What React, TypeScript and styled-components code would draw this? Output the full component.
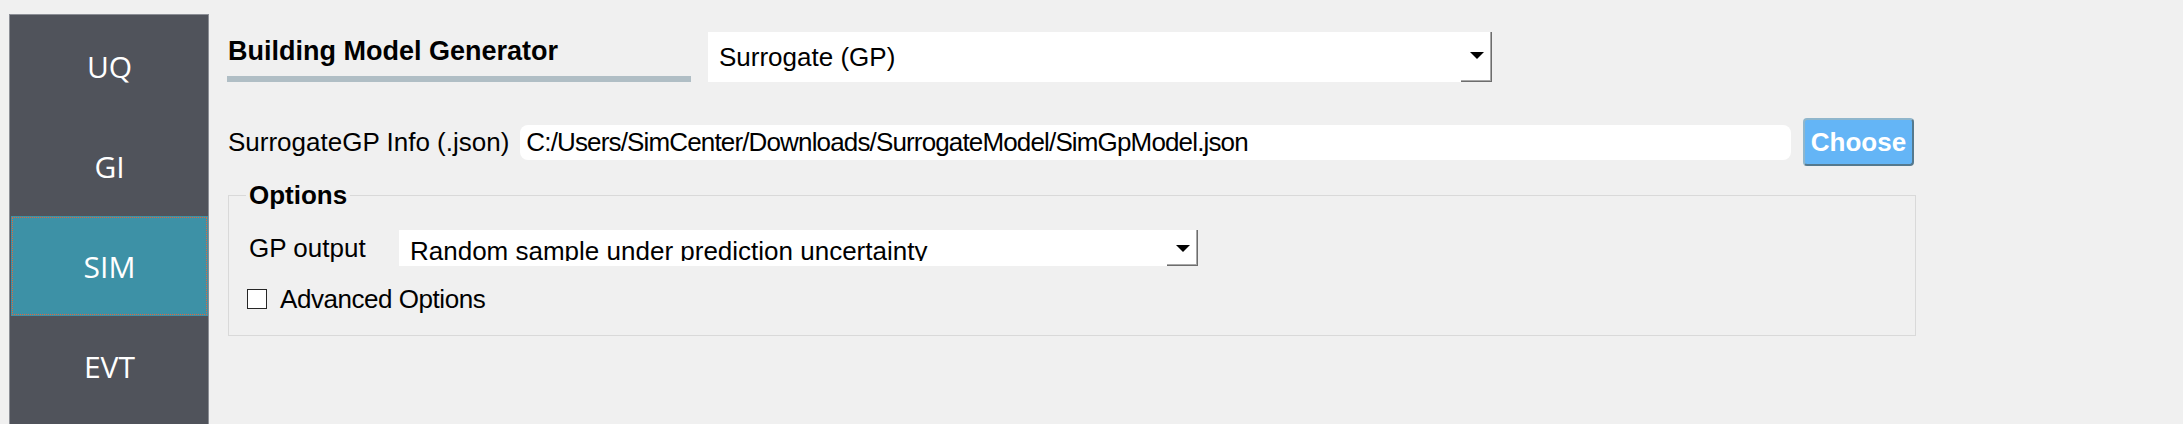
import React from "react";
import styled, { createGlobalStyle } from "styled-components";

const GlobalStyle = createGlobalStyle`
  html, body {
    margin: 0;
    padding: 0;
    background: #f0f0f0;
    overflow: hidden;
  }
  body {
    font-family: "Liberation Sans", Arial, sans-serif;
    color: #000;
  }
  * { box-sizing: border-box; }
`;

const Page = styled.div`
  display: flex;
  align-items: flex-start;
  width: 2183px;
  height: 424px;
  overflow: hidden;
`;

const Sidebar = styled.nav`
  margin: 14px 0 0 9px;
  width: 200px;
  height: 420px;
  flex-shrink: 0;
  background: #50535b;
  border: 1px solid #8b8e95;
  border-bottom: none;
  padding: 1px 0 0 1px;
  display: flex;
  flex-direction: column;
`;

const NavItem = styled.div<{ $active?: boolean }>`
  height: 100px;
  width: 197px;
  display: flex;
  align-items: center;
  justify-content: center;
  font-family: "Open Sans", "Noto Sans", sans-serif;
  font-size: 30px;
  color: #ffffff;
  background: ${(p) => (p.$active ? "#3d91a6" : "transparent")};
  outline: ${(p) => (p.$active ? "1px dotted #e0663c" : "none")};
  outline-offset: -2px;
`;

const Main = styled.main`
  margin-left: 18px;
  padding-top: 32px;
  width: 1689px;
  display: flex;
  flex-direction: column;
`;

const TopRow = styled.div`
  display: flex;
  align-items: flex-end;
  gap: 17px;
`;

const HeaderBlock = styled.div`
  width: 464px;
  display: flex;
  flex-direction: column;
`;

const HeaderTitle = styled.h1`
  margin: 0 0 10px 0;
  padding-left: 1px;
  font: bold 27px/30px "Liberation Sans", Arial, sans-serif;
  white-space: nowrap;
`;

const HeaderBar = styled.div`
  height: 6px;
  background: #b0bec5;
`;

const Combo = styled.div<{ $w: number; $h: number }>`
  width: ${(p) => p.$w}px;
  height: ${(p) => p.$h}px;
  background: #ffffff;
  display: flex;
  align-items: center;
  flex-shrink: 0;
`;

const ComboText = styled.div<{ $clip?: boolean }>`
  flex: 1;
  padding-left: 11px;
  font-size: 26px;
  white-space: nowrap;
  overflow: hidden;
  align-self: ${(p) => (p.$clip ? "flex-start" : "center")};
  height: ${(p) => (p.$clip ? "31px" : "auto")};
  line-height: ${(p) => (p.$clip ? "42px" : "30px")};
`;

const ArrowButton = styled.div<{ $lift: number }>`
  width: 31px;
  align-self: stretch;
  display: flex;
  align-items: center;
  justify-content: center;
  padding-bottom: ${(p) => p.$lift}px;
  box-shadow: inset -1px -1px 0 #6d6d6d, inset -2px -2px 0 #a8a8a8;
`;

const FileRow = styled.div`
  display: flex;
  align-items: center;
  margin-top: 36px;
  height: 48px;
  padding-left: 1px;
  padding-right: 2px;
`;

const FieldLabel = styled.label<{ $w?: number }>`
  font-size: 26px;
  line-height: 30px;
  white-space: nowrap;
  width: ${(p) => (p.$w ? `${p.$w}px` : "auto")};
  flex-shrink: 0;
  margin-right: ${(p) => (p.$w ? "0" : "11px")};
`;

const LineEdit = styled.input`
  flex: 1;
  min-width: 0;
  height: 35px;
  border: none;
  outline: none;
  background: #ffffff;
  border-radius: 8px;
  padding: 0 0 0 6px;
  font-family: "Liberation Sans", Arial, sans-serif;
  font-size: 26px;
  letter-spacing: -0.85px;
  color: #000;
`;

const ChooseButton = styled.button`
  margin-left: 12px;
  width: 111px;
  height: 48px;
  flex-shrink: 0;
  background: #64b5f6;
  border: 2px solid;
  border-color: #8fb6cc #55798e #55798e #8fb6cc;
  border-radius: 4px;
  color: #ffffff;
  font: bold 26px/1 "Liberation Sans", Arial, sans-serif;
  padding: 0;
`;

const GroupBox = styled.fieldset`
  margin: 14px 0 0 1px;
  width: 1688px;
  border: 1px solid #d9d9d9;
  padding: 20px 20px 21px 20px;
  min-inline-size: 0;
`;

const GroupTitle = styled.legend`
  margin-left: -3px;
  padding: 0 3px;
  font: bold 26px/30px "Liberation Sans", Arial, sans-serif;
`;

const OptionRow = styled.div`
  display: flex;
  align-items: center;
  height: 36px;
`;

const CheckRow = styled.div`
  display: flex;
  align-items: center;
  height: 30px;
  margin-top: 18px;
`;

const CheckBox = styled.span`
  width: 20px;
  height: 20px;
  margin-left: -2px;
  background: #ffffff;
  border: 1px solid #262626;
  flex-shrink: 0;
`;

const CheckLabel = styled.span`
  margin-left: 13px;
  font-size: 26px;
  line-height: 30px;
  letter-spacing: -0.45px;
  white-space: nowrap;
`;

const DownArrow = () => (
  <svg width="14" height="7" viewBox="0 0 14 7" aria-hidden="true">
    <path d="M0 0 H14 L7 7 Z" fill="#000" />
  </svg>
);

export default function App() {
  return (
    <>
      <GlobalStyle />
      <Page>
        <Sidebar>
          <NavItem>UQ</NavItem>
          <NavItem>GI</NavItem>
          <NavItem $active>SIM</NavItem>
          <NavItem>EVT</NavItem>
        </Sidebar>
        <Main>
          <TopRow>
            <HeaderBlock>
              <HeaderTitle>Building Model Generator</HeaderTitle>
              <HeaderBar />
            </HeaderBlock>
            <Combo $w={784} $h={50}>
              <ComboText>Surrogate (GP)</ComboText>
              <ArrowButton $lift={4}>
                <DownArrow />
              </ArrowButton>
            </Combo>
          </TopRow>
          <FileRow>
            <FieldLabel>SurrogateGP Info (.json)</FieldLabel>
            <LineEdit
              readOnly
              value="C:/Users/SimCenter/Downloads/SurrogateModel/SimGpModel.json"
            />
            <ChooseButton>Choose</ChooseButton>
          </FileRow>
          <GroupBox>
            <GroupTitle>Options</GroupTitle>
            <OptionRow>
              <FieldLabel $w={150}>GP output</FieldLabel>
              <Combo $w={799} $h={36}>
                <ComboText $clip>Random sample under prediction uncertainty</ComboText>
                <ArrowButton $lift={0}>
                  <DownArrow />
                </ArrowButton>
              </Combo>
            </OptionRow>
            <CheckRow>
              <CheckBox />
              <CheckLabel>Advanced Options</CheckLabel>
            </CheckRow>
          </GroupBox>
        </Main>
      </Page>
    </>
  );
}
